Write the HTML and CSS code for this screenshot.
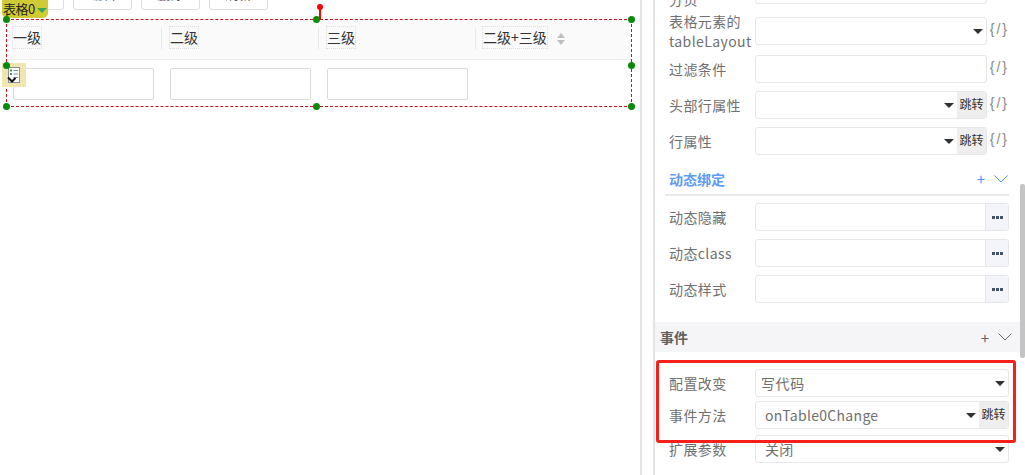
FILE: index.html
```html
<!DOCTYPE html>
<html lang="zh-CN">
<head>
    <meta charset="UTF-8">
    <title>表格配置</title>
    <link rel="stylesheet" href="styles.css">
</head>
<body>
    <div class="canvas">
        <div class="toolbar">
            <div class="tool-btn">新增</div>
            <div class="tool-btn">编辑</div>
            <div class="tool-btn">删除</div>
            <div class="tool-btn">刷新</div>
        </div>
        <div class="widget">
            <div class="table-head">
                <div class="th"><span class="th-label">一级</span></div>
                <div class="th"><span class="th-label">二级</span></div>
                <div class="th"><span class="th-label">三级</span></div>
                <div class="th">
                    <span class="th-label">二级+三级</span>
                    <span class="sorter"><i class="sort-up"></i><i class="sort-down"></i></span>
                </div>
            </div>
            <div class="table-row">
                <div class="td"><div class="cell-input"></div></div>
                <div class="td"><div class="cell-input"></div></div>
                <div class="td"><div class="cell-input"></div></div>
                <div class="td"></div>
            </div>
            <div class="selection">
                <span class="handle h-tl"></span>
                <span class="handle h-tc"></span>
                <span class="handle h-tr"></span>
                <span class="handle h-ml"></span>
                <span class="handle h-mr"></span>
                <span class="handle h-bl"></span>
                <span class="handle h-bc"></span>
                <span class="handle h-br"></span>
                <span class="rotate"></span>
            </div>
        </div>
        <div class="widget-tag">表格0<span class="tag-caret"></span></div>
        <div class="widget-icon">
            <svg width="14" height="17" viewBox="0 0 14 17">
                <rect x="1.5" y="0.5" width="11" height="15" fill="#fff" stroke="#8a9099"/>
                <rect x="3" y="2.5" width="2" height="2" fill="#3c9a4a"/>
                <rect x="3" y="6" width="2" height="2" fill="#3c9a4a"/>
                <path d="M6.5 3.5h4.5M6.5 7h4.5M6.5 10.5h4.5" stroke="#6d8fb5"/>
                <path d="M1 10.5l4 4 3.5-3.5" fill="none" stroke="#111" stroke-width="2"/>
            </svg>
        </div>
    </div>

    <div class="panel">
        <div class="form">
            <div class="row row-cut">
                <div class="label">分页</div>
                <div class="input short"></div>
            </div>
            <div class="row row-tall">
                <div class="label">表格元素的<br>tableLayout</div>
                <div class="input short"><span class="caret"></span></div>
                <div class="code">{/}</div>
            </div>
            <div class="row">
                <div class="label">过滤条件</div>
                <div class="input short"></div>
                <div class="code">{/}</div>
            </div>
            <div class="row">
                <div class="label">头部行属性</div>
                <div class="input short"><span class="caret"></span><span class="jump">跳转</span></div>
                <div class="code">{/}</div>
            </div>
            <div class="row">
                <div class="label">行属性</div>
                <div class="input short"><span class="caret"></span><span class="jump">跳转</span></div>
                <div class="code">{/}</div>
            </div>

            <div class="sub-title">
                <span class="sub-name">动态绑定</span>
                <span class="plus">+</span>
                <svg class="chevron" width="14" height="8" viewBox="0 0 14 8"><path d="M0.5 0.5L7 7l6.5-6.5" fill="none" stroke="currentColor"/></svg>
            </div>
            <div class="row">
                <div class="label">动态隐藏</div>
                <div class="input"><span class="dots"><svg width="11" height="3" viewBox="0 0 11 3"><path d="M0 0h3v3H0zM4 0h3v3H4zM8 0h3v3H8z" fill="#44546a"/></svg></span></div>
            </div>
            <div class="row">
                <div class="label">动态class</div>
                <div class="input"><span class="dots"><svg width="11" height="3" viewBox="0 0 11 3"><path d="M0 0h3v3H0zM4 0h3v3H4zM8 0h3v3H8z" fill="#44546a"/></svg></span></div>
            </div>
            <div class="row">
                <div class="label">动态样式</div>
                <div class="input"><span class="dots"><svg width="11" height="3" viewBox="0 0 11 3"><path d="M0 0h3v3H0zM4 0h3v3H4zM8 0h3v3H8z" fill="#44546a"/></svg></span></div>
            </div>
        </div>

        <div class="section-bar">
            <span class="section-name">事件</span>
            <span class="plus">+</span>
            <svg class="chevron" width="14" height="8" viewBox="0 0 14 8"><path d="M0.5 0.5L7 7l6.5-6.5" fill="none" stroke="currentColor"/></svg>
        </div>

        <div class="form events">
            <div class="row row-first">
                <div class="label">配置改变</div>
                <div class="input"><span class="value value-near">写代码</span><span class="caret"></span></div>
            </div>
            <div class="row row-tight">
                <div class="label">事件方法</div>
                <div class="input"><span class="value">onTable0Change</span><span class="caret"></span><span class="jump">跳转</span></div>
            </div>
            <div class="row row-tight">
                <div class="label">扩展参数</div>
                <div class="input"><span class="value">关闭</span><span class="caret"></span></div>
            </div>
            <div class="highlight"></div>
        </div>
        <div class="scroll-thumb"></div>
    </div>
</body>
</html>
```

FILE: styles.css
```css
html, body{
    margin: 0;
    padding: 0;
    height: 475px;
    overflow: hidden;
    background: #fff;
    font-family: "Noto Sans CJK SC", "Liberation Sans", sans-serif;
    font-size: 14px;
    color: #333;
}
body{
    display: flex;
}

/* left canvas */
.canvas{
    position: relative;
    width: 640px;
    height: 475px;
    border-right: 2px solid #e4e4e4;
    box-sizing: content-box;
    flex: none;
}
.toolbar{
    display: flex;
    gap: 9px;
    margin: -18px 0 0 5px;
}
.tool-btn{
    width: 59px;
    height: 28px;
    box-sizing: border-box;
    border: 1px solid #ddd;
    border-radius: 3px;
    text-align: center;
    line-height: 21px;
    font-size: 13px;
    color: #555;
}
.widget{
    position: relative;
    width: 624px;
    margin: 10px 0 0 7px;
}
.table-head{
    display: flex;
    height: 40px;
    box-sizing: border-box;
    background: #fafafa;
    border-bottom: 1px solid #eee;
}
.th{
    position: relative;
    width: 157px;
    flex: none;
    padding: 6px 0 0 5px;
    box-sizing: border-box;
    display: flex;
    align-items: flex-start;
}
.th + .th::before{
    content: "";
    position: absolute;
    left: -3px;
    top: 8px;
    width: 1px;
    height: 21px;
    background: #e8e8e8;
}
.th:last-child{
    width: 153px;
    padding-left: 4px;
}
.th-label{
    display: block;
    height: 21px;
    line-height: 21px;
    border: 1px dotted #ddd;
    color: #333;
}
.sorter{
    display: flex;
    flex-direction: column;
    gap: 2px;
    margin: 7px 0 0 9px;
}
.sort-up{
    border-left: 4px solid transparent;
    border-right: 4px solid transparent;
    border-bottom: 5px solid #bfbfbf;
}
.sort-down{
    border-left: 4px solid transparent;
    border-right: 4px solid transparent;
    border-top: 5px solid #bfbfbf;
}
.table-row{
    display: flex;
    padding: 8px 0;
}
.td{
    width: 157px;
    flex: none;
    box-sizing: border-box;
    padding-left: 6px;
}
.td:last-child{
    width: 153px;
}
.cell-input{
    width: 141px;
    height: 32px;
    box-sizing: border-box;
    border: 1px solid #d9d9d9;
    border-radius: 2px;
}

/* selection overlay */
.selection{
    position: absolute;
    left: -1px;
    top: -1px;
    width: 626px;
    height: 88px;
    box-sizing: border-box;
    border: 1px dashed #c8101c;
}
.handle{
    position: absolute;
    width: 7px;
    height: 7px;
    border-radius: 50%;
    background: #0a8a0a;
    z-index: 3;
}
.h-tl{ left: -4px; top: -4px; }
.h-tc{ left: 306px; top: -4px; }
.h-tr{ right: -4px; top: -4px; }
.h-ml{ left: -4px; top: 42px; }
.h-mr{ right: -4px; top: 42px; }
.h-bl{ left: -4px; bottom: -4px; }
.h-bc{ left: 306px; bottom: -4px; }
.h-br{ right: -4px; bottom: -4px; }
.rotate{
    position: absolute;
    left: 312px;
    top: -13px;
    width: 2px;
    height: 13px;
    background: #f00;
}
.rotate::before{
    content: "";
    position: absolute;
    left: -2px;
    top: -3px;
    width: 6px;
    height: 6px;
    border-radius: 50%;
    background: #f00;
}
.widget-tag{
    position: absolute;
    left: 2px;
    top: 0;
    width: 46px;
    height: 18px;
    box-sizing: border-box;
    padding-left: 1px;
    background: #cfcb35;
    border-radius: 0 0 5px 5px;
    font-size: 13px;
    line-height: 18px;
    letter-spacing: -0.5px;
    color: #222;
    white-space: nowrap;
    display: flex;
    align-items: center;
    gap: 2px;
}
.tag-caret{
    width: 0;
    height: 0;
    border-left: 5px solid transparent;
    border-right: 5px solid transparent;
    border-top: 5px solid #3aa655;
    margin-top: 2px;
}
.widget-icon{
    position: absolute;
    left: 2px;
    top: 63px;
    width: 24px;
    height: 24px;
    background: #f0e6b0;
    display: flex;
    align-items: center;
    justify-content: center;
    z-index: 1;
}

/* right panel */
.panel{
    position: relative;
    width: 370px;
    margin-left: 11px;
    border-left: 2px solid #e4e4e4;
    height: 475px;
    flex: none;
    overflow: hidden;
}
.form{
    padding: 0 0 0 14px;
    width: 340px;
}
.row{
    display: flex;
    align-items: center;
    height: 28px;
    margin-bottom: 8px;
}
.row-cut{
    margin-top: -24px;
}
.row-cut .label{
    padding-top: 18px;
}
.row-tall{
    height: 35px;
    padding: 5px 0 2px;
    box-sizing: border-box;
    margin-bottom: 8px;
}
.label{
    width: 86px;
    flex: none;
    line-height: 20px;
    color: #707070;
    letter-spacing: 0.4px;
    white-space: nowrap;
}
.input{
    position: relative;
    flex: 1;
    height: 28px;
    box-sizing: border-box;
    border: 1px solid #e6e6e9;
    border-radius: 3px;
    display: flex;
    align-items: center;
    justify-content: flex-end;
    overflow: hidden;
}
.short{
    flex: none;
    width: 232px;
}
.code{
    width: 22px;
    flex: none;
    text-align: right;
    font-family: "Liberation Sans", sans-serif;
    font-size: 14px;
    letter-spacing: 2px;
    color: #888;
    margin-top: -4px;
}
.caret{
    width: 0;
    height: 0;
    border-left: 5px solid transparent;
    border-right: 5px solid transparent;
    border-top: 5px solid #303133;
    margin-right: 3px;
}
.jump{
    width: 29px;
    height: 26px;
    background: #eee;
    font-size: 12px;
    line-height: 24px;
    text-align: center;
    color: #333;
    flex: none;
}
.dots{
    width: 22px;
    height: 26px;
    background: #f3f5fb;
    border-left: 1px solid #e6e6e9;
    display: flex;
    align-items: center;
    justify-content: center;
    flex: none;
}
.value{
    flex: 1;
    padding-left: 9px;
    color: #707070;
    letter-spacing: 0.3px;
    white-space: nowrap;
}
.value-near{
    padding-left: 5px;
    letter-spacing: 0.6px;
}
.sub-title{
    display: flex;
    align-items: center;
    height: 33px;
    margin: 4px 0 7px -4px;
    padding-left: 4px;
    border-bottom: 2px solid #eaeaea;
    box-sizing: border-box;
    color: #4f97f7;
}
.sub-name{
    flex: 1;
    font-size: 14px;
    font-weight: bold;
    color: #5a9cf8;
}
.plus{
    font-size: 15px;
    margin-right: 9px;
}
.chevron{
    margin-right: 1px;
}
.section-bar{
    display: flex;
    align-items: center;
    width: 365px;
    height: 30px;
    margin-top: 19px;
    padding: 0 7px 0 5px;
    box-sizing: border-box;
    background: #f5f5f7;
    color: #666;
}
.section-name{
    flex: 1;
    font-weight: bold;
    color: #606060;
}
.events{
    position: relative;
    padding-top: 17px;
}
.row-first{
    margin-bottom: 7px;
}
.row-tight{
    margin: -3px 0 9px;
}
.highlight{
    position: absolute;
    left: 1px;
    top: 8px;
    width: 360px;
    height: 83px;
    box-sizing: border-box;
    border: 3px solid #f5201a;
    border-radius: 3px;
}
.scroll-thumb{
    position: absolute;
    left: 365px;
    top: 184px;
    width: 5px;
    height: 174px;
    background: #c4c4c4;
    border-radius: 2px;
}
```
